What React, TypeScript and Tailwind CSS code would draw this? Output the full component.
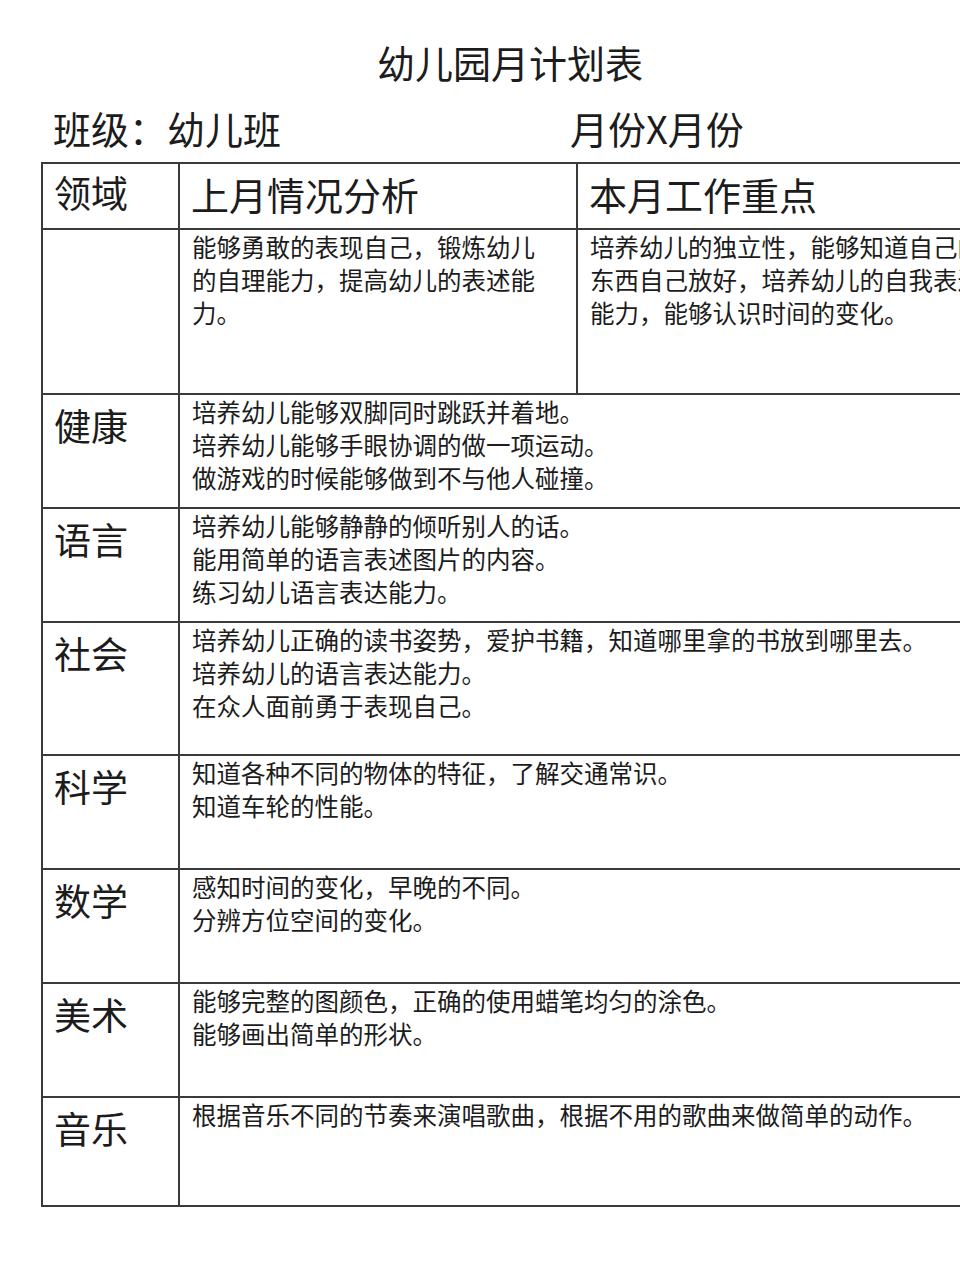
import React from 'react'

const rows = [
  {
    label: '健康',
    h: 'h-[114px]',
    lines: ['培养幼儿能够双脚同时跳跃并着地。', '培养幼儿能够手眼协调的做一项运动。', '做游戏的时候能够做到不与他人碰撞。'],
  },
  {
    label: '语言',
    h: 'h-[114px]',
    lines: ['培养幼儿能够静静的倾听别人的话。', '能用简单的语言表述图片的内容。', '练习幼儿语言表达能力。'],
  },
  {
    label: '社会',
    h: 'h-[133px]',
    lines: ['培养幼儿正确的读书姿势，爱护书籍，知道哪里拿的书放到哪里去。', '培养幼儿的语言表达能力。', '在众人面前勇于表现自己。'],
  },
  {
    label: '科学',
    h: 'h-[114px]',
    lines: ['知道各种不同的物体的特征，了解交通常识。', '知道车轮的性能。'],
  },
  {
    label: '数学',
    h: 'h-[114px]',
    lines: ['感知时间的变化，早晚的不同。', '分辨方位空间的变化。'],
  },
  {
    label: '美术',
    h: 'h-[114px]',
    lines: ['能够完整的图颜色，正确的使用蜡笔均匀的涂色。', '能够画出简单的形状。'],
  },
  {
    label: '音乐',
    h: 'h-[109px]',
    lines: ['根据音乐不同的节奏来演唱歌曲，根据不用的歌曲来做简单的动作。'],
  },
]

const cell = 'border-r-2 border-b-2 border-[#3a3a3a]'

export default function App() {
  return (
    <div
      className="w-full min-h-[1280px] overflow-hidden bg-white text-[#1c1c1c]"
      style={{ fontFamily: '"Noto Sans CJK SC", "Noto Sans", sans-serif' }}
    >
      <div className="pt-[38px] pl-[377px] text-[38px] leading-[48px] whitespace-nowrap">幼儿园月计划表</div>

      <div className="mt-[18px] flex pl-[53px] text-[38px] leading-[48px] whitespace-nowrap">
        <span className="w-[517px]">班级：幼儿班</span>
        <span>月份X月份</span>
      </div>

      <div className="mt-[10px] ml-[41px] w-[957px] border-t-2 border-l-2 border-[#3a3a3a]">
        {/* header */}
        <div className="grid grid-cols-[137px_398px_420px] h-[66px]">
          <div className={`${cell} flex items-center pl-[11px] pb-[6px] text-[37px] whitespace-nowrap`}>领域</div>
          <div className={`${cell} flex items-center pl-[11px] pb-[6px] text-[38px] whitespace-nowrap`}>上月情况分析</div>
          <div className={`${cell} flex items-center pl-[11px] pb-[6px] text-[38px] whitespace-nowrap`}>本月工作重点</div>
        </div>

        {/* first row */}
        <div className="grid grid-cols-[137px_398px_420px] h-[165px]">
          <div className={cell}></div>
          <div className={`${cell} pl-3 pr-5 text-[24.5px] leading-[33px]`}>
            能够勇敢的表现自己，锻炼幼儿的自理能力，提高幼儿的表述能力。
          </div>
          <div className={`${cell} pl-3 pr-2 text-[24.5px] leading-[33px]`}>
            培养幼儿的独立性，能够知道自己的东西自己放好，培养幼儿的自我表达能力，能够认识时间的变化。
          </div>
        </div>

        {rows.map(r => (
          <div key={r.label} className={`grid grid-cols-[137px_818px] ${r.h}`}>
            <div className={`${cell} pl-[11px] pt-[8px] text-[37px] leading-[44px]`}>{r.label}</div>
            <div className={`${cell} pl-3 text-[24.5px] leading-[33px] whitespace-nowrap`}>
              {r.lines.map(l => (
                <div key={l}>{l}</div>
              ))}
            </div>
          </div>
        ))}
      </div>
    </div>
  )
}
